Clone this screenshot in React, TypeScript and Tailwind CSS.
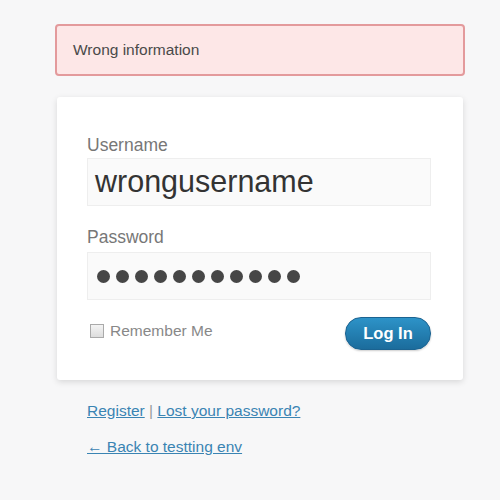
export default function App() {
  const dots = Array.from({ length: 11 });
  return (
    <div className="min-h-[500px] w-[500px] bg-[#f7f7f8] font-['Liberation_Sans',Arial,sans-serif]">
      <div className="flex w-[410px] flex-col pl-[55px] pt-[24px] box-content">
        {/* Error message */}
        <div className="flex h-[52px] items-center rounded-[4px] border-2 border-[#e39a9c] bg-[#fde7e7] pl-[16px] text-[15.5px] text-[#4a4a4a]">
          Wrong information
        </div>

        {/* Login card */}
        <div className="mx-[2px] mt-[21px] flex flex-col rounded-[3px] bg-white pb-[30px] pl-[30px] pr-[32px] pt-[38px] shadow-[0_2px_6px_rgba(0,0,0,0.13)]">
          <label className="text-[17.5px] leading-[20px] text-[#777]">Username</label>
          <div className="mt-[3px] flex h-[48px] items-center border border-[#eee] bg-[#fafafa] pl-[7px] text-[30.5px] text-[#333]">
            wrongusername
          </div>

          <label className="mt-[21px] text-[17.5px] leading-[20px] text-[#777]">Password</label>
          <div className="mt-[5px] flex h-[48px] items-center gap-[6px] border border-[#eee] bg-[#fafafa] pl-[9px]">
            {dots.map((_, i) => (
              <span key={i} className="h-[13px] w-[13px] rounded-full bg-[#464646]" />
            ))}
          </div>

          <div className="mt-[17px] flex items-start justify-between">
            <div className="mt-[5px] flex items-center gap-[6px]">
              <span className="ml-[3px] h-[14px] w-[14px] border border-[#aaa] bg-gradient-to-b from-[#f4f4f4] to-[#ddd]" />
              <span className="text-[15.5px] leading-[18px] text-[#888]">Remember Me</span>
            </div>
            <button className="h-[33px] w-[86px] rounded-[16px] border border-[#1b6391] bg-gradient-to-b from-[#2d93c8] to-[#1b6c9c] text-[16.5px] font-bold text-white shadow-[0_1px_2px_rgba(0,0,0,0.2)]">
              Log In
            </button>
          </div>
        </div>

        {/* Links */}
        <div className="mt-[22px] pl-[32px] text-[15.5px] leading-[18px] text-[#3a84b3]">
          <a className="underline">Register</a>
          <span className="text-[#999]"> | </span>
          <a className="underline">Lost your password?</a>
        </div>
        <div className="mt-[18px] pl-[32px] text-[15.5px] leading-[18px] text-[#3a84b3]">
          <a className="underline">← Back to testting env</a>
        </div>
      </div>
    </div>
  );
}
